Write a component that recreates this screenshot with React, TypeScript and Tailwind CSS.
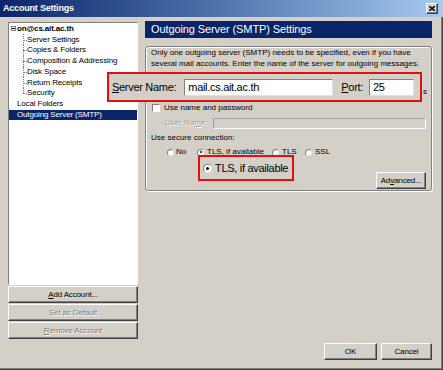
import React from 'react';

const raised =
  'border border-t-white border-l-white border-b-[#404040] border-r-[#404040] shadow-[inset_-1px_-1px_0_#808080] bg-[#d4d0c8]';
const sunken = 'border border-t-[#808080] border-l-[#808080] border-b-white border-r-white';

const children = [
  'Server Settings',
  'Copies & Folders',
  'Composition & Addressing',
  'Disk Space',
  'Return Receipts',
  'Security',
];

function TreeChild({ label, last }: { label: string; last: boolean }) {
  return (
    <div className="flex h-[10.75px] items-center">
      <div className="relative w-[4px] self-stretch ml-[14px]">
        <div
          className={
            'absolute left-0 top-0 border-l border-dotted border-[#808080] ' +
            (last ? 'h-1/2' : 'h-full')
          }
        />
        <div className="absolute left-0 top-1/2 w-[4px] border-t border-dotted border-[#808080]" />
      </div>
      <span className="whitespace-nowrap">{label}</span>
    </div>
  );
}

function Button({
  label,
  under,
  disabled,
  className,
}: {
  label: string;
  under?: number;
  disabled?: boolean;
  className?: string;
}) {
  const text =
    under === undefined ? (
      label
    ) : (
      <>
        {label.slice(0, under)}
        <span className="underline">{label[under]}</span>
        {label.slice(under + 1)}
      </>
    );
  return (
    <div
      className={
        raised +
        ' h-[17px] flex items-center justify-center ' +
        (disabled ? 'text-[#808080] [text-shadow:1px_1px_0_#fff] ' : 'text-black ') +
        (className ?? '')
      }
    >
      {text}
    </div>
  );
}

function Radio({ checked, big }: { checked?: boolean; big?: boolean }) {
  const s = big ? 'w-[9px] h-[9px]' : 'w-[7px] h-[7px]';
  return (
    <span
      className={
        s +
        ' rounded-full bg-white border border-[#808080] border-b-[#e8e8e8] border-r-[#e8e8e8] flex items-center justify-center shrink-0'
      }
    >
      {checked && <span className={(big ? 'w-[3px] h-[3px]' : 'w-[2px] h-[2px]') + ' rounded-full bg-black'} />}
    </span>
  );
}

export default function App() {
  return (
    <div className="relative w-[443px] h-[370px] overflow-hidden bg-[#d4d0c8] font-['Liberation_Sans',Arial,sans-serif] text-[8px] tracking-[-0.15px] text-black shadow-[inset_-1px_-1px_0_#404040,inset_-2px_-2px_0_#808080]">
      {/* title bar */}
      <div className="h-[17px] flex items-center justify-between pl-[3px] pr-[5px] bg-gradient-to-r from-[#0a246a] to-[#a6caf0]">
        <span className="text-white font-bold text-[9px] tracking-[-0.2px]">Account Settings</span>
        <div className={raised + ' w-[12px] h-[11px] flex items-center justify-center'}>
          <svg width="6" height="5" viewBox="0 0 6 5">
            <path d="M0 0L6 5M6 0L0 5" stroke="#000" strokeWidth="1.5" />
          </svg>
        </div>
      </div>

      <div className="flex pl-[8px] gap-[7px]">
        {/* left column */}
        <div className="w-[130px] pt-[5px] flex flex-col">
          <div className={sunken + ' h-[263px] bg-white pt-[0.5px]'}>
            <div className="flex h-[10.75px] items-center">
              <span className="ml-[2px] w-[5px] h-[5px] border border-[#808080] flex items-center justify-center">
                <span className="w-[3px] border-t border-black" />
              </span>
              <span className="ml-[1px] font-bold whitespace-nowrap">on@cs.ait.ac.th</span>
            </div>
            {children.map((c, i) => (
              <TreeChild key={c} label={c} last={i === children.length - 1} />
            ))}
            <div className="flex h-[10.75px] items-center pl-[8px]">Local Folders</div>
            <div className="flex h-[10px] items-center pl-[8px] bg-[#0a246a] text-white">
              Outgoing Server (SMTP)
            </div>
          </div>
          <div className="mt-[1px] flex flex-col gap-[1px]">
            <Button label="Add Account..." under={0} />
            <Button label="Set as Default" disabled />
            <Button label="Remove Account" under={0} disabled />
          </div>
        </div>

        {/* right column */}
        <div className="w-[287px] pt-[4px] flex flex-col">
          <div className="h-[17px] bg-[#0a246a] text-white text-[11px] tracking-[-0.1px] flex items-center pl-[6px]">
            Outgoing Server (SMTP) Settings
          </div>
          <div className="mt-[8px] h-[145px] border border-[#808080] rounded-[3px] shadow-[inset_1px_1px_0_#fff,1px_1px_0_#fff] px-[5px] pt-[1px] flex flex-col tracking-normal">
            <p className="leading-[10.5px] whitespace-nowrap">
              Only one outgoing server (SMTP) needs to be specified, even if you have
              <br />
              several mail accounts. Enter the name of the server for outgoing messages.
            </p>
            <div className="h-[34px] flex justify-end items-end pb-[5px] -mr-[1px]">
              <span>s</span>
            </div>
            <div className="h-[9px] flex items-center gap-[4px] ml-[1px]">
              <span className={sunken + ' w-[8px] h-[8px] bg-white'} />
              <span>Use name and password</span>
            </div>
            <div className="h-[12px] mt-[5px] flex items-center">
              <span className="ml-[14px] text-[#a0a0a0] [text-shadow:1px_1px_0_#fff]">
                User Na<span className="underline">m</span>e:
              </span>
              <span className="ml-auto w-[213px] h-[11px] border border-[#a0a0a0] border-b-white border-r-white" />
            </div>
            <div className="h-[10px] mt-[4px] flex items-center">Use secure connection:</div>
            <div className="h-[10px] mt-[4px] flex items-center pl-[16px]">
              <span className="w-[30px] flex items-center gap-[2px]">
                <Radio />
                No
              </span>
              <span className="w-[75px] flex items-center gap-[3px]">
                <Radio checked />
                TLS, if available
              </span>
              <span className="w-[33px] flex items-center gap-[3px]">
                <Radio />
                TLS
              </span>
              <span className="flex items-center gap-[3px]">
                <Radio />
                SSL
              </span>
            </div>
            <div className="mt-[15px] flex justify-end tracking-[-0.15px]">
              <Button label="Advanced..." under={2} className="w-[50px] h-[16px]" />
            </div>
          </div>
          <div className="mt-[152px] flex justify-end gap-[4px]">
            <Button label="OK" className="w-[53px]" />
            <Button label="Cancel" className="w-[51px]" />
          </div>
        </div>
      </div>

      {/* highlight callouts */}
      <div className="absolute left-[107px] top-[72px] w-[315px] h-[30px] border-2 border-[#e01010] bg-[#d4d0c8] flex items-center text-[11px] tracking-[-0.3px]">
        <span className="ml-[3px]">
          <span className="underline">S</span>erver Name:
        </span>
        <span className="ml-[8px] w-[149px] h-[17px] bg-white border border-[#808080] border-b-[#e0e0e0] border-r-[#e0e0e0] flex items-center pl-[3px]">
          mail.cs.ait.ac.th
        </span>
        <span className="ml-[8px]">
          <span className="underline">P</span>ort:
        </span>
        <span className="ml-[6px] w-[45px] h-[17px] bg-white border border-[#808080] border-b-[#e0e0e0] border-r-[#e0e0e0] flex items-center pl-[3px]">
          25
        </span>
      </div>
      <div className="absolute left-[198px] top-[155px] w-[96px] h-[26px] border-2 border-[#e01010] bg-[#d4d0c8] flex items-center gap-[3px] pl-[3px] text-[11px] tracking-[-0.3px]">
        <Radio checked big />
        TLS, if available
      </div>
    </div>
  );
}
